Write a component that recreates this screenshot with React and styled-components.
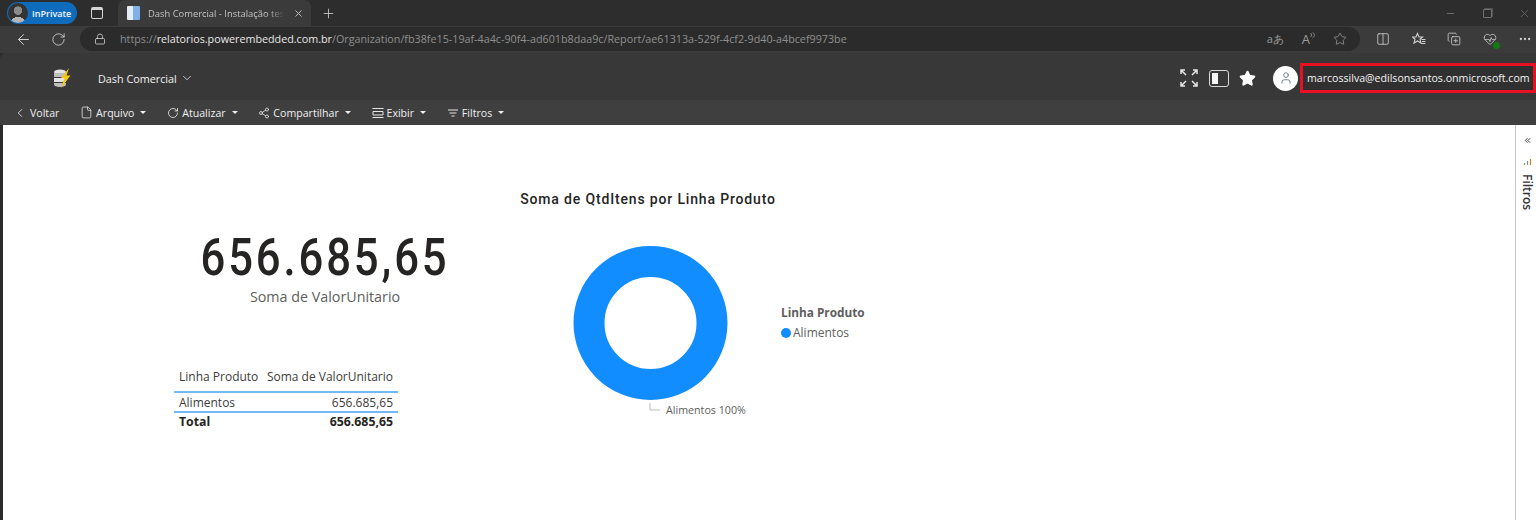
import React from 'react';
import styled, { createGlobalStyle } from 'styled-components';
import {
  ArrowLeft,
  RotateCw,
  Lock,
  Plus,
  X,
  Minus,
  Star,
  Columns2,
  MoreHorizontal,
  ChevronDown,
  ChevronLeft,
  ChevronsLeft,
  File,
  Share2,
  User,
  HeartPulse,
  CopyPlus,
} from 'lucide-react';

const GlobalStyle = createGlobalStyle`
  html, body {
    margin: 0;
    padding: 0;
    background: #fff;
    overflow: hidden;
  }
  body {
    font-family: 'Open Sans', 'Noto Sans', sans-serif;
  }
`;

const Page = styled.div`
  width: 1536px;
  height: 520px;
  display: flex;
  flex-direction: column;
  background: #2b2b2b;
`;

/* browser chrome */
const TabStrip = styled.div`
  height: 26px;
  display: flex;
  align-items: center;
  background: #2d2d2d;
  padding-left: 7px;
`;

const Profile = styled.div`
  width: 70px;
  height: 22px;
  border-radius: 11px;
  background: #0f6cbd;
  display: flex;
  align-items: center;
  gap: 4px;
  color: #f2f6fb;
  font-size: 9px;
  font-weight: 600;
  white-space: nowrap;
`;

const Avatar = styled.span`
  width: 20px;
  height: 20px;
  margin-left: 1px;
  border-radius: 50%;
  background:
    radial-gradient(circle at 50% 38%, #8a8a8a 0 4px, transparent 4.5px),
    radial-gradient(ellipse 8px 6px at 50% 100%, #b5b5b5 0 100%, transparent 100%),
    #333;
`;

const TabGlyph = styled.span`
  width: 12px;
  height: 12px;
  margin: 0 15px 0 14px;
  border: 1.5px solid #d6d6d6;
  border-top-width: 3px;
  border-radius: 2px;
  box-sizing: border-box;
`;

const Tab = styled.div`
  width: 193px;
  height: 26px;
  box-sizing: border-box;
  padding: 0 7px 0 9px;
  background: #3b3b3b;
  border-radius: 7px 7px 0 0;
  display: flex;
  align-items: center;
  gap: 8px;
  color: #c4c4c4;
  font-size: 9.4px;
  white-space: nowrap;
`;

const TabTitle = styled.span`
  flex: 1;
  overflow: hidden;
  -webkit-mask-image: linear-gradient(90deg, #000 88%, transparent 100%);
  mask-image: linear-gradient(90deg, #000 88%, transparent 100%);
`;

const Favicon = styled.span`
  width: 13px;
  height: 14px;
  background: linear-gradient(90deg, #e4edf7 0 45%, #7fb0e6 45% 100%);
  border-radius: 1px;
`;

const NewTab = styled.span`
  margin-left: 10px;
  display: flex;
  color: #cfcfcf;
`;

const WindowButtons = styled.div`
  margin-left: auto;
  display: flex;
  align-items: center;
  gap: 26.5px;
  padding-right: 5px;
  color: #6f6f6f;
`;

const RestoreIcon = styled.span`
  width: 7px;
  height: 7px;
  border: 1px solid #6f6f6f;
  border-radius: 1px;
  box-shadow: 1px -1px 0 0 #555;
`;

const Toolbar = styled.div`
  height: 27px;
  display: flex;
  align-items: center;
  background: #3b3b3b;
  color: #d0d0d0;
  padding-bottom: 1px;
  box-sizing: border-box;
`;

const NavIcon = styled.span`
  display: flex;
  width: 24px;
  justify-content: center;
  margin-left: ${p => p.$left || 0}px;
`;

const AddressBar = styled.div`
  width: 1280px;
  height: 24px;
  margin-left: 10px;
  border-radius: 12px;
  background: #2b2b2b;
  display: flex;
  align-items: center;
  font-size: 10.75px;
  color: #8f8f8f;
  white-space: nowrap;
  box-sizing: border-box;
  padding-left: 14px;
`;

const UrlText = styled.span`
  margin-left: 14px;

  b {
    font-weight: 400;
    color: #e8e8e8;
  }
`;

const AddressIcons = styled.div`
  margin-left: auto;
  display: flex;
  align-items: center;
  gap: 18px;
  padding-right: 13px;
  color: #9c9c9c;
  font-size: 11px;
`;

const ReadAloud = styled.span`
  display: flex;
  align-items: flex-start;
  font-size: 13px;
  line-height: 14px;
`;

const ToolbarIcons = styled.div`
  display: flex;
  align-items: center;
  gap: 21.5px;
  margin-left: 16px;
  color: #cfcfcf;
`;

const FavoritesIcon = styled.svg`
  width: 14px;
  height: 14px;
`;

const HealthIcon = styled.span`
  width: 14px;
  height: 14px;
  display: flex;
  position: relative;

  &::after {
    content: '';
    position: absolute;
    right: -3px;
    bottom: -3px;
    width: 7px;
    height: 7px;
    border-radius: 50%;
    background: #107c10;
  }
`;

/* power bi embedded app */
const AppHeader = styled.div`
  height: 47px;
  box-sizing: border-box;
  padding-top: 3px;
  display: flex;
  align-items: center;
  background: #383838;
  border-radius: 6px 0 0 0;
  color: #f2f2f2;
`;

const Logo = styled.svg`
  width: 18px;
  height: 20px;
  margin-left: 53px;
`;

const ReportName = styled.div`
  margin-left: 27px;
  display: flex;
  align-items: center;
  gap: 3px;
  font-size: 10.8px;
`;

const HeaderActions = styled.div`
  margin-left: auto;
  display: flex;
  align-items: center;
  height: 100%;
`;

const ExpandIcon = styled.svg`
  width: 18px;
  height: 18px;
`;

const PanelToggle = styled.span`
  width: 20px;
  height: 17px;
  margin-left: 11px;
  box-sizing: border-box;
  border: 1.5px solid #d8d8d8;
  border-radius: 3px;
  padding: 2px;
  display: flex;

  &::before {
    content: '';
    width: 6px;
    background: #f5f5f5;
  }
`;

const StarSlot = styled.span`
  display: flex;
  margin-left: 10px;
`;

const UserCircle = styled.span`
  width: 25px;
  height: 25px;
  margin-left: 17px;
  border-radius: 50%;
  background: #fff;
  color: #5b6b7a;
  display: flex;
  align-items: center;
  justify-content: center;
`;

const Email = styled.div`
  height: 30px;
  width: 236px;
  margin-left: 2px;
  box-sizing: border-box;
  border: 3px solid #e81123;
  background: #303030;
  display: flex;
  align-items: center;
  padding-left: 4px;
  font-size: 10.6px;
  white-space: nowrap;
  color: #f5f5f5;
`;

const CommandBar = styled.div`
  height: 25px;
  background: #3f3f3f;
  display: flex;
  align-items: center;
  padding-left: 13px;
  gap: 20.75px;
  color: #efefef;
  font-size: 10.6px;
`;

const Command = styled.div`
  display: flex;
  align-items: center;
  gap: 3px;
  white-space: nowrap;
`;

const Caret = styled.span`
  width: 0;
  height: 0;
  margin-left: 3px;
  border-left: 3.5px solid transparent;
  border-right: 3.5px solid transparent;
  border-top: 3.5px solid #f0f0f0;
`;

const SmallGlyph = styled.svg`
  width: 12px;
  height: 10px;
`;

/* report canvas */
const Body = styled.div`
  flex: 1;
  display: flex;
  background: #fff;
  margin-left: 3px;
`;

const Canvas = styled.div`
  flex: 1;
  display: grid;
  grid-template-columns: 567px 1fr;
  color: #252423;
`;

const LeftColumn = styled.div`
  display: flex;
  flex-direction: column;
  align-items: flex-start;
  padding: 104px 0 0 171px;
`;

const CardValue = styled.div`
  width: 302px;
  text-align: center;
  font-family: 'Roboto', sans-serif;
  font-size: 52px;
  font-weight: 500;
  line-height: 58px;
  letter-spacing: 3.4px;
  white-space: nowrap;
  transform: scaleX(0.84);
  color: #252423;
`;

const CardLabel = styled.div`
  width: 302px;
  text-align: center;
  font-size: 14.3px;
  line-height: 20px;
  color: #605e5c;
`;

const Table = styled.div`
  width: 224px;
  margin-top: 55px;
  font-size: 12px;
  line-height: 18px;
`;

const TableRow = styled.div`
  display: flex;
  justify-content: space-between;
  padding: ${p => p.$nudge || 0}px 5px 0;
  border-bottom: ${p => (p.$line ? '2px solid #74b9f7' : 'none')};
  font-weight: ${p => (p.$bold ? 700 : 400)};
  font-size: ${p => (p.$bold ? 12.3 : 12)}px;
  color: ${p => (p.$bold ? '#252423' : '#3d3c3b')};
  height: ${p => p.$height}px;
  align-items: center;
`;

const ChartColumn = styled.div`
  display: flex;
  flex-direction: column;
  padding-top: 64px;
`;

const ChartTitle = styled.div`
  width: 256px;
  margin-left: -50px;
  text-align: center;
  white-space: nowrap;
  font-family: 'Roboto', sans-serif;
  font-size: 14px;
  font-weight: 500;
  line-height: 20px;
  letter-spacing: 0.84px;
  color: #252423;
`;

const ChartRow = styled.div`
  display: flex;
  margin-top: 37px;
`;

const DonutBox = styled.div`
  width: 211px;
`;

const Donut = styled.svg`
  width: 207px;
  height: 172px;
  display: block;
`;

const Legend = styled.div`
  padding-top: 57px;
  font-size: 12px;
  line-height: 18px;
  color: #605e5c;
`;

const LegendTitle = styled.div`
  font-size: 11.8px;
  font-weight: 700;
`;

const LegendItem = styled.div`
  display: flex;
  align-items: center;
  gap: 2px;
  margin-top: 3px;

  &::before {
    content: '';
    width: 10px;
    height: 10px;
    border-radius: 50%;
    background: #118dff;
  }
`;

const FilterRail = styled.div`
  width: 21px;
  box-sizing: border-box;
  padding: 11px 0 0 3px;
  border-left: 1px solid #c8c8c8;
  display: flex;
  flex-direction: column;
  align-items: center;
  color: #333;
`;

const RailGlyph = styled.svg`
  width: 9px;
  height: 9px;
  margin-top: 12px;
`;

const RailText = styled.div`
  writing-mode: vertical-rl;
  font-size: 12px;
  font-weight: 600;
  margin-top: 8px;
`;

const LogoMark = () => (
  <Logo viewBox="0 0 18 20">
    <ellipse cx="7" cy="4" rx="6" ry="2.5" fill="#e3e3e3" />
    <rect x="1" y="5" width="12" height="4" fill="#bdbdbd" />
    <rect x="1" y="10" width="12" height="4" fill="#e3e3e3" />
    <path d="M1 15h12v1.500c0 1.400-2.700 2.500-6 2.500s-6-1.100-6-2.500z" fill="#bdbdbd" />
    <path d="M16 0 8 10h3.500l-3.500 10 9.500-12.500h-4z" fill="#f2c811" />
  </Logo>
);

const ViewIcon = () => (
  <SmallGlyph viewBox="0 0 12 10" fill="none" stroke="#e6e6e6" strokeWidth="1">
    <path d="M0.500 0.500h11M1 3.500h10v3.500h-10zM0.500 9.500h11" />
  </SmallGlyph>
);

const FilterIcon = () => (
  <SmallGlyph viewBox="0 0 12 10" fill="none" stroke="#e6e6e6" strokeWidth="1.200">
    <path d="M1 2h10M2.500 5h7M4.500 8h3" />
  </SmallGlyph>
);

const commands = [
  { label: 'Arquivo', icon: <File size={13} strokeWidth={1.4} /> },
  { label: 'Atualizar', icon: <RotateCw size={12} strokeWidth={1.6} /> },
  { label: 'Compartilhar', icon: <Share2 size={12} strokeWidth={1.5} /> },
  { label: 'Exibir', icon: <ViewIcon /> },
  { label: 'Filtros', icon: <FilterIcon /> },
];

const App = () => {
  return (
    <Page>
      <GlobalStyle />
      <TabStrip>
        <Profile>
          <Avatar />
          InPrivate
        </Profile>
        <TabGlyph />
        <Tab>
          <Favicon />
          <TabTitle>Dash Comercial - Instalação teste</TabTitle>
          <X size={11} />
        </Tab>
        <NewTab>
          <Plus size={15} strokeWidth={1.3} />
        </NewTab>
        <WindowButtons>
          <Minus size={11} />
          <RestoreIcon />
          <X size={13} strokeWidth={1.3} />
        </WindowButtons>
      </TabStrip>
      <Toolbar>
        <NavIcon $left={11}>
          <ArrowLeft size={17} strokeWidth={1.4} />
        </NavIcon>
        <NavIcon $left={11}>
          <RotateCw size={15} strokeWidth={1.4} />
        </NavIcon>
        <AddressBar>
          <Lock size={12} strokeWidth={1.6} color="#d0d0d0" />
          <UrlText>
            https://<b>relatorios.powerembedded.com.br</b>
            /Organization/fb38fe15-19af-4a4c-90f4-ad601b8daa9c/Report/ae61313a-529f-4cf2-9d40-a4bcef9973be
          </UrlText>
          <AddressIcons>
            <span>aあ</span>
            <ReadAloud>
              A
              <svg width="5" height="8" viewBox="0 0 5 8" fill="none" stroke="#9c9c9c" strokeWidth="0.8">
                <path d="M0.500 1c1.500 1 1.500 3 0 4M2.500 0c2.500 2 2.500 4 0 6" />
              </svg>
            </ReadAloud>
            <Star size={14} strokeWidth={1.3} />
          </AddressIcons>
        </AddressBar>
        <ToolbarIcons>
          <Columns2 size={14} strokeWidth={1.4} />
          <FavoritesIcon viewBox="0 0 14 14" fill="none" stroke="#cfcfcf" strokeWidth="1.100">
            <path d="M5.500 1.500 7 5h3.500L8 7.300 9 11 5.500 9 2 11l1-3.700L.5 5H4zM9.500 7.500h4M10 9.500h3.500M9 11.500h4.500" />
          </FavoritesIcon>
          <CopyPlus size={14} strokeWidth={1.4} />
          <HealthIcon>
            <HeartPulse size={14} strokeWidth={1.3} />
          </HealthIcon>
          <MoreHorizontal size={14} />
        </ToolbarIcons>
      </Toolbar>
      <AppHeader>
        <LogoMark />
        <ReportName>
          Dash Comercial
          <ChevronDown size={14} strokeWidth={1.3} />
        </ReportName>
        <HeaderActions>
          <ExpandIcon viewBox="0 0 18 18" fill="none" stroke="#e6e6e6" strokeWidth="1.5">
            <path d="M1 5V1h4M1 1l5 5M13 1h4v4M17 1l-5 5M1 13v4h4M1 17l5-5M17 13v4h-4M17 17l-5-5" />
          </ExpandIcon>
          <PanelToggle />
          <StarSlot>
            <Star size={17} fill="#fff" color="#fff" />
          </StarSlot>
          <UserCircle>
            <User size={14} strokeWidth={1.4} />
          </UserCircle>
          <Email>marcossilva@edilsonsantos.onmicrosoft.com</Email>
        </HeaderActions>
      </AppHeader>
      <CommandBar>
        <Command>
          <ChevronLeft size={14} strokeWidth={1.4} />
          Voltar
        </Command>
        {commands.map(c => (
          <Command key={c.label}>
            {c.icon}
            {c.label}
            <Caret />
          </Command>
        ))}
      </CommandBar>
      <Body>
        <Canvas>
          <LeftColumn>
            <CardValue>656.685,65</CardValue>
            <CardLabel>Soma de ValorUnitario</CardLabel>
            <Table>
              <TableRow $line $height={29}>
                <span>Linha Produto</span>
                <span>Soma de ValorUnitario</span>
              </TableRow>
              <TableRow $line $height={17} $nudge={1}>
                <span>Alimentos</span>
                <span>656.685,65</span>
              </TableRow>
              <TableRow $bold $height={18}>
                <span>Total</span>
                <span>656.685,65</span>
              </TableRow>
            </Table>
          </LeftColumn>
          <ChartColumn>
            <ChartTitle>Soma de QtdItens por Linha Produto</ChartTitle>
            <ChartRow>
              <DonutBox>
                <Donut viewBox="0 0 207 172">
                  <circle cx="80.500" cy="77" r="61.500" fill="none" stroke="#118dff" strokeWidth="31" />
                  <path d="M80 157v7h10" fill="none" stroke="#bdbdbd" strokeWidth="1" />
                  <text x="96" y="168" fontSize="10.700" fill="#605e5c" fontFamily="'Open Sans', sans-serif">
                    Alimentos 100%
                  </text>
                </Donut>
              </DonutBox>
              <Legend>
                <LegendTitle>Linha Produto</LegendTitle>
                <LegendItem>Alimentos</LegendItem>
              </Legend>
            </ChartRow>
          </ChartColumn>
        </Canvas>
        <FilterRail>
          <ChevronsLeft size={9} strokeWidth={2.6} />
          <RailGlyph viewBox="0 0 9 9" fill="none" strokeWidth="1.200">
            <path d="M1.500 6v2M4.500 4v4" stroke="#8a8a8a" />
            <path d="M7.500 2v6" stroke="#b8862b" />
          </RailGlyph>
          <RailText>Filtros</RailText>
        </FilterRail>
      </Body>
    </Page>
  );
};

export default App;
